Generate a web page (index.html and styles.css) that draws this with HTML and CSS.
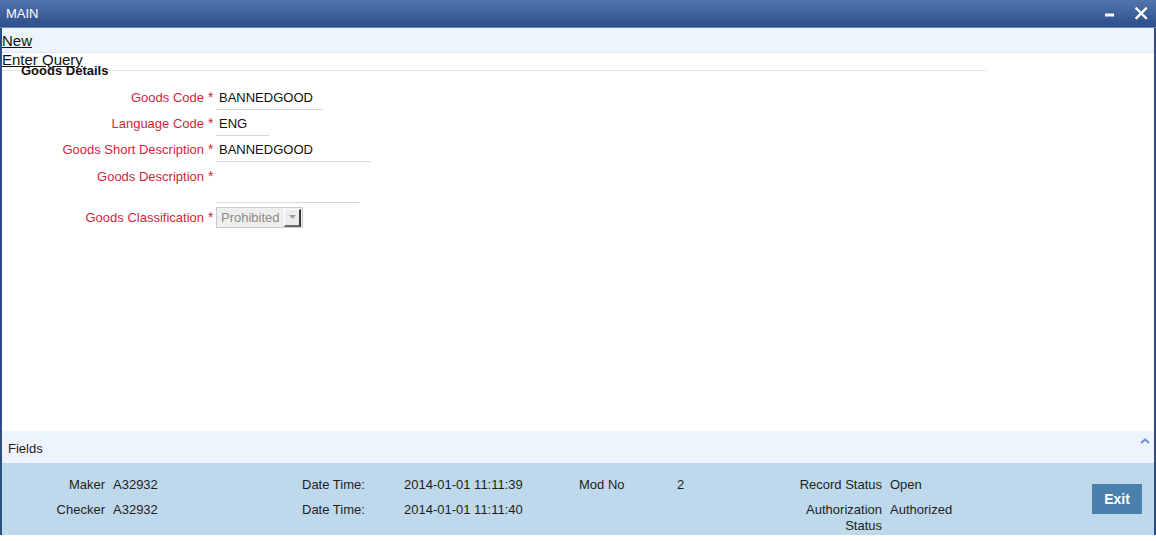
FILE: index.html
```html
<!DOCTYPE html>
<html>
<head>
<meta charset="utf-8">
<title>MAIN</title>
<link rel="stylesheet" href="styles.css">
</head>
<body>
<div class="window">
  <div class="titlebar">
    <span class="title">MAIN</span>
    <div class="win-ctrls">
      <svg class="ctrl-min" width="10" height="4" viewBox="0 0 10 4"><rect x="0" y="0.5" width="9" height="3" fill="#fff"/></svg>
      <svg class="ctrl-close" width="13" height="13" viewBox="0 0 13 13"><path d="M1.5 1.5 L11 11 M11 1.5 L1.5 11" stroke="#fff" stroke-width="2.4" stroke-linecap="square"/></svg>
    </div>
  </div>
  <div class="toolbar">
    <a class="tool-link" href="#">New</a>
    <a class="tool-link" href="#">Enter Query</a>
  </div>
  <div class="content">
    <div class="fieldset">
      <div class="legend">Goods Details</div>
      <div class="form">
        <div class="row">
          <label class="lbl">Goods Code</label><span class="req">*</span>
          <div class="input w107">BANNEDGOOD</div>
        </div>
        <div class="row">
          <label class="lbl">Language Code</label><span class="req">*</span>
          <div class="input w53">ENG</div>
        </div>
        <div class="row">
          <label class="lbl">Goods Short Description</label><span class="req">*</span>
          <div class="input w155">BANNEDGOOD</div>
        </div>
        <div class="row row-tall">
          <label class="lbl">Goods Description</label><span class="req">*</span>
          <div class="textarea"></div>
        </div>
        <div class="row row-select">
          <label class="lbl">Goods Classification</label><span class="req">*</span>
          <div class="select">
            <span class="select-val">Prohibited</span>
            <span class="select-btn"><svg width="7" height="4" viewBox="0 0 7 4"><path d="M0 0 H7 L3.5 4 Z" fill="#9a9a9a"/></svg></span>
          </div>
        </div>
      </div>
    </div>
  </div>
  <div class="fields-bar">
    <span class="fields-title">Fields</span>
    <svg class="chevron" width="10" height="6" viewBox="0 0 10 6"><path d="M1 5 L5 1.5 L9 5" stroke="#6d8fc2" stroke-width="2" fill="none"/></svg>
  </div>
  <div class="audit">
    <span class="a-lbl">Maker</span>
    <span class="a-val">A32932</span>
    <span class="a-plain">Date Time:</span>
    <span class="a-plain">2014-01-01 11:11:39</span>
    <span class="a-plain">Mod No</span>
    <span class="a-plain">2</span>
    <span class="a-lbl">Record Status</span>
    <span class="a-val">Open</span>
    <button class="exit-btn">Exit</button>

    <span class="a-lbl">Checker</span>
    <span class="a-val">A32932</span>
    <span class="a-plain">Date Time:</span>
    <span class="a-plain">2014-01-01 11:11:40</span>
    <span class="a-plain"></span>
    <span class="a-plain"></span>
    <span class="a-lbl">Authorization<br>Status</span>
    <span class="a-val">Authorized</span>
  </div>
</div>
</body>
</html>
```
FILE: styles.css
```css
* { box-sizing: border-box; }
html, body { margin: 0; padding: 0; background: #ffffff; }
body {
  font-family: "Liberation Sans", Arial, sans-serif;
  font-size: 13px;
  color: #1e1e1e;
  width: 1156px;
  height: 541px;
  overflow: hidden;
}
.window {
  width: 1156px;
  height: 535px;
  display: flex;
  flex-direction: column;
  border-left: 2px solid #2d4d83;
  border-right: 2px solid #2d4d83;
}
.titlebar {
  height: 28px;
  flex: none;
  display: flex;
  align-items: center;
  justify-content: space-between;
  background: linear-gradient(#5076ad, #2c4e8c);
  border-bottom: 1px solid #7189b0;
  padding: 0 8px 0 4px;
  margin-left: -2px;
  margin-right: -2px;
}
.title { color: #ffffff; font-size: 13px; padding-left: 2px; }
.win-ctrls { display: flex; align-items: center; gap: 20px; }
.ctrl-min { margin-top: 3px; }
.toolbar {
  height: 25px;
  flex: none;
  background: #eef4fd;
  border-bottom: 1px solid #dfe5ec;
  display: flex;
  flex-direction: column;
  padding-top: 3px;
}
.tool-link {
  display: block;
  color: #111111;
  font-size: 15px;
  line-height: 19px;
  text-decoration: underline;
  width: max-content;
}
.content { flex: 1; min-height: 0; }
.fieldset {
  width: 985px;
  margin-top: 17px;
  border-top: 1px solid #e6e6e6;
}
.legend {
  font-weight: bold;
  font-size: 13px;
  line-height: 15px;
  margin-top: -8px;
  margin-left: 19px;
  color: #111;
}
.form { margin-top: 9px; display: flex; flex-direction: column; }
.row { display: flex; height: 26px; align-items: flex-start; }
.lbl {
  width: 202px;
  text-align: right;
  color: #d21f3c;
  line-height: 22px;
}
.req {
  width: 12px;
  padding-left: 4px;
  color: #d21f3c;
  line-height: 20px;
  font-size: 14px;
}
.input {
  height: 23px;
  line-height: 21px;
  border-bottom: 1px solid #d6d6d6;
  padding-left: 3px;
  color: #111;
}
.w107 { width: 107px; }
.w53 { width: 53px; }
.w155 { width: 155px; }
.row-tall { height: 39px; }
.row-tall .lbl { padding-top: 3px; line-height: 18px; }
.row-tall .req { padding-top: 3px; line-height: 16px; }
.textarea { width: 143px; height: 38px; border-bottom: 1px solid #d6d6d6; }
.row-select { height: 24px; margin-top: 3px; }
.row-select .lbl { line-height: 21px; }
.select {
  width: 87px;
  height: 21px;
  border: 1px solid #cacaca;
  background: #efefed;
  display: flex;
  align-items: center;
  justify-content: space-between;
  padding-left: 4px;
}
.select-val { color: #8a8a8a; }
.select-btn {
  width: 17px;
  height: 18px;
  background: #ececec;
  border-top: 1px solid #ffffff;
  border-left: 1px solid #ffffff;
  border-right: 2px solid #3a3a3a;
  border-bottom: 2px solid #6a6a6a;
  display: flex;
  align-items: center;
  justify-content: center;
  margin-right: 1px;
}
.fields-bar {
  height: 32px;
  flex: none;
  background: #eef4fd;
  display: flex;
  justify-content: space-between;
  align-items: center;
  padding: 0 4px 0 6px;
}
.fields-title { color: #1e1e1e; padding-top: 2px; }
.chevron { align-self: flex-start; margin-top: 7px; }
.audit {
  height: 72px;
  flex: none;
  background: #bed8ec;
  display: grid;
  grid-template-columns: 103px 197px 102px 175px 98px 98px 107px 210px 50px;
  grid-template-rows: 16px 16px;
  row-gap: 9px;
  padding-top: 14px;
  line-height: 16px;
  color: #1e1e1e;
}
.a-lbl { text-align: right; }
.a-val { padding-left: 8px; }
.exit-btn {
  grid-column: 9;
  grid-row: 1 / 3;
  margin-top: 7px;
  width: 50px;
  height: 30px;
  background: #4a80ad;
  border: none;
  color: #ffffff;
  font-family: "Liberation Sans", Arial, sans-serif;
  font-weight: bold;
  font-size: 14px;
  padding: 0;
}
```
